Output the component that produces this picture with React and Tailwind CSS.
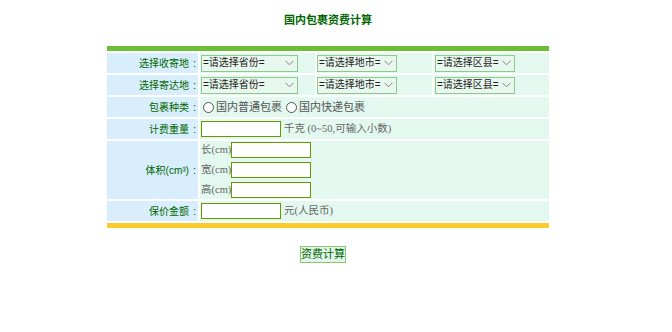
import React from "react";

const sans = { fontFamily: '"Liberation Sans", "Noto Sans CJK SC", sans-serif' };

function Chevron() {
  return (
    <svg width="9" height="6" viewBox="0 0 9 6" className="shrink-0">
      <path d="M0.5 0.8 L4.5 4.8 L8.5 0.8" fill="none" stroke="#808080" strokeWidth="1" />
    </svg>
  );
}

function FakeSelect({ text, w }) {
  return (
    <div
      className={`flex items-center justify-between h-[17px] border border-[#8dc88d] bg-[#e8f8ee] pl-[1px] pr-[3px] text-[10px] text-[#222] leading-none ${w}`}
    >
      <span className="whitespace-nowrap">{text}</span>
      <Chevron />
    </div>
  );
}

function Label({ text }) {
  return (
    <div className="w-[91px] shrink-0 bg-[#d9eefc] flex items-center justify-end pr-[2px] text-[10px] text-[#006600] whitespace-nowrap" style={sans}>
      <span>{text}</span>
      <span className="ml-[4px] text-[11px]">:</span>
    </div>
  );
}

function Input({ w = "w-[80px]" }) {
  return <div className={`${w} h-[16px] border border-[#669900] bg-white shrink-0`} />;
}

function Radio() {
  return <span className="inline-block w-[11px] h-[11px] rounded-full border border-[#555] bg-white mr-[2px] shrink-0" />;
}

function AddrRow({ label }) {
  return (
    <div className="flex gap-[2px] h-[20px]">
      <Label text={label} />
      <div className="flex-1 grid grid-cols-3 gap-[2px]" style={sans}>
        <div className="bg-[#e3f8ef] flex items-center pl-[1px]">
          <FakeSelect text="=请选择省份=" w="w-[97px]" />
        </div>
        <div className="bg-[#e3f8ef] flex items-center">
          <FakeSelect text="=请选择地市=" w="w-[80px]" />
        </div>
        <div className="bg-[#e3f8ef] flex items-center pl-[1px]">
          <FakeSelect text="=请选择区县=" w="w-[80px]" />
        </div>
      </div>
    </div>
  );
}

export default function App() {
  return (
    <div
      className="w-[672px] h-[332px] bg-white overflow-hidden"
      style={{ fontFamily: '"Liberation Serif", "Noto Sans CJK SC", serif' }}
    >
      <div className="w-[656px]">
        <div className="pt-[12px] h-[46px] text-center text-[11px] font-bold text-[#006600]" style={sans}>
          国内包裹资费计算
        </div>
        <div className="w-[442px] ml-[107px] flex flex-col gap-[2px]">
          <div className="h-[5px] bg-[#6abf34]" />
          <AddrRow label="选择收寄地" />
          <AddrRow label="选择寄达地" />
          <div className="flex gap-[2px] h-[20px]">
            <Label text="包裹种类" />
            <div className="flex-1 bg-[#e3f8ef] flex items-center pl-[3px] text-[11px] text-[#555]" style={sans}>
              <Radio />
              <span>国内普通包裹</span>
              <span className="w-[4px]" />
              <Radio />
              <span>国内快递包裹</span>
            </div>
          </div>
          <div className="flex gap-[2px] h-[20px]">
            <Label text="计费重量" />
            <div className="flex-1 bg-[#e3f8ef] flex items-center pl-[1px] text-[10.5px] text-[#666] whitespace-nowrap">
              <Input />
              <span className="ml-[3px]">千克 (0~50,可输入小数)</span>
            </div>
          </div>
          <div className="flex gap-[2px] h-[58px]">
            <Label text="体积(cm³)" />
            <div className="flex-1 bg-[#e3f8ef] flex flex-col gap-[4px] pt-[1px] pl-[1px] text-[10.5px] text-[#666]">
              {["长", "宽", "高"].map((c) => (
                <div key={c} className="flex items-center h-[16px]">
                  <span className="w-[30px] shrink-0 whitespace-nowrap">{c}(cm)</span>
                  <Input />
                </div>
              ))}
            </div>
          </div>
          <div className="flex gap-[2px] h-[20px]">
            <Label text="保价金额" />
            <div className="flex-1 bg-[#e3f8ef] flex items-center pl-[1px] text-[10.5px] text-[#666] whitespace-nowrap">
              <Input />
              <span className="ml-[3px]">元(人民币)</span>
            </div>
          </div>
          <div className="h-[5px] bg-[#fdcc2c]" />
        </div>
        <div className="ml-[300px] mt-[18px] w-[46px] h-[17px] border border-[#8bc46b] bg-[#e2f5ea] flex items-center justify-center text-[11px] text-[#006600]" style={sans}>
          资费计算
        </div>
      </div>
    </div>
  );
}
